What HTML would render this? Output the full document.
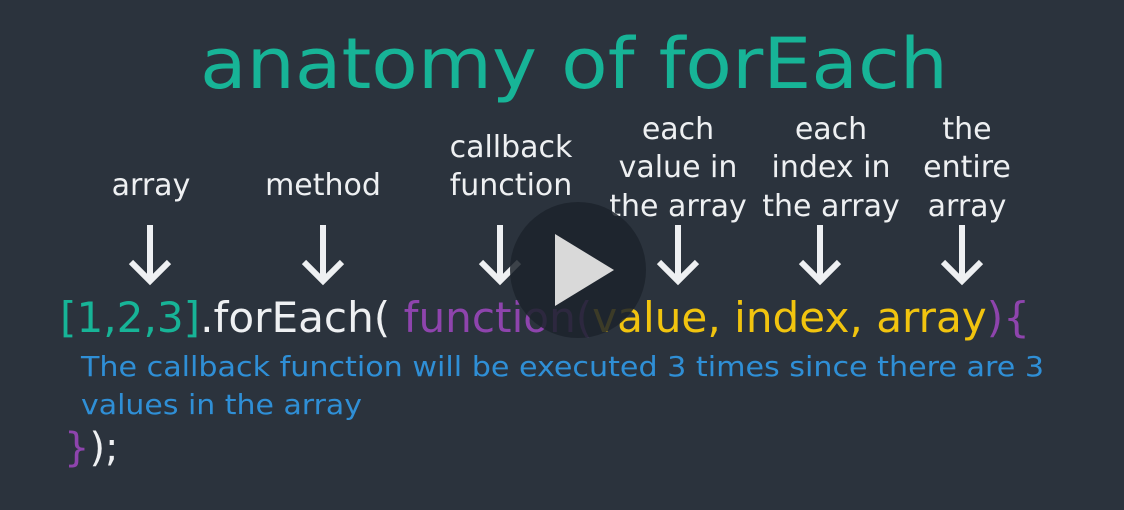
<!DOCTYPE html>
<html><head><style>
html,body{margin:0;padding:0;background:#2b333d;}
svg{display:block}
text{font-family:"DejaVu Sans","Liberation Sans",sans-serif;}
</style></head><body>
<svg width="1124" height="510" viewBox="0 0 1124 510">
<rect width="1124" height="510" fill="#2b333d"/>
<text x="200" y="88" font-size="70" fill="#17b497" textLength="748" lengthAdjust="spacingAndGlyphs">anatomy of forEach</text>
<g font-size="30" fill="#eef0f2" text-anchor="middle">
<text x="151" y="195">array</text>
<text x="323" y="195">method</text>
<text x="511" y="157">callback</text>
<text x="511" y="195">function</text>
<text x="678" y="139">each</text>
<text x="678" y="177">value in</text>
<text x="678" y="216">the array</text>
<text x="831" y="139">each</text>
<text x="831" y="177">index in</text>
<text x="831" y="216">the array</text>
<text x="967" y="139">the</text>
<text x="967" y="177">entire</text>
<text x="967" y="216">array</text>
</g>
<g stroke="#eef0f2" stroke-width="6" fill="none" stroke-linecap="butt">
<path d="M150 225V280M131 262L150 281L169 262"/>
<path d="M323 225V280M304 262L323 281L342 262"/>
<path d="M500 225V280M481 262L500 281L519 262"/>
<path d="M678 225V280M659 262L678 281L697 262"/>
<path d="M820 225V280M801 262L820 281L839 262"/>
<path d="M962 225V280M943 262L962 281L981 262"/>
</g>
<text x="60" y="332" font-size="42" textLength="970" lengthAdjust="spacingAndGlyphs"><tspan fill="#17b497">[1,2,3]</tspan><tspan fill="#eef0f2">.forEach( </tspan><tspan fill="#8e44ad">function(</tspan><tspan fill="#f1c40f">value, index, array</tspan><tspan fill="#8e44ad">){</tspan></text>
<g font-size="28" fill="#2f8fd6">
<text x="81" y="376" textLength="963" lengthAdjust="spacingAndGlyphs">The callback function will be executed 3 times since there are 3</text>
<text x="81" y="414" textLength="281" lengthAdjust="spacingAndGlyphs">values in the array</text>
</g>
<text x="64" y="461" font-size="40"><tspan fill="#8e44ad">}</tspan><tspan fill="#eef0f2">);</tspan></text>
<circle cx="578" cy="270" r="68" fill="#1c232b" fill-opacity="0.85"/>
<path d="M555 248L555 320L614 284Z" fill="#d9d9d9" transform="translate(0,-14)"/>
</svg>
</body></html>
